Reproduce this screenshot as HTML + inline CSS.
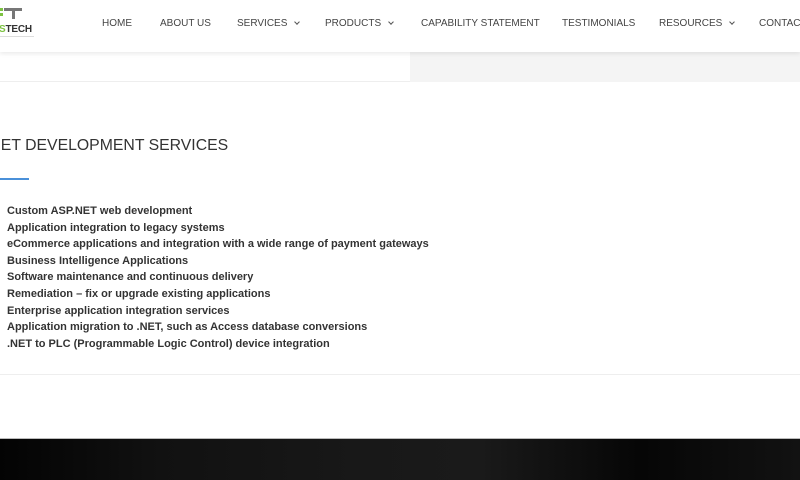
<!DOCTYPE html>
<html><head><style>
html,body{margin:0;padding:0;width:800px;height:480px;overflow:hidden;background:#fff;font-family:"Liberation Sans",sans-serif;position:relative}
.hdr{position:absolute;left:0;top:0;width:800px;height:52px;background:#fff;box-shadow:0 2px 4px rgba(0,0,0,.08);z-index:2}
.nav{position:absolute;top:18px;font-size:10px;color:#444;white-space:nowrap;letter-spacing:0}
.nav span{position:absolute}
.chev{display:inline-block;width:3px;height:3px;border-right:1px solid #555;border-bottom:1px solid #555;transform:rotate(45deg);margin-left:8px;position:relative;top:-2px}
.band1{position:absolute;left:0;top:52px;width:410px;height:29px;background:#fff;border-bottom:1px solid #eee}
.band2{position:absolute;left:410px;top:52px;width:390px;height:30px;background:#f4f4f4}
h1{position:absolute;left:-15px;top:137px;margin:0;font-weight:normal;font-size:15.8px;color:#333;white-space:nowrap;letter-spacing:0}
.bl{position:absolute;left:0;top:178px;width:29px;height:2px;background:#4a90d9}
ul{position:absolute;left:7px;top:203px;margin:0;padding:0;list-style:none;font-size:11px;font-weight:bold;color:#333;line-height:16.6px}
.hr{position:absolute;left:0;top:374px;width:800px;height:1px;background:#eee}
.ft{position:absolute;left:0;top:438px;width:800px;height:42px;background:linear-gradient(90deg,#030303 0%,#111 20%,#181818 45%,#1a1a1a 60%,#060606 80%,#121212 100%);border-top:1px solid #bbb}
</style></head><body>
<div class="hdr">
 <div style="position:absolute;left:0;top:8px;width:3px;height:3px;background:#7cc242"></div>
 <div style="position:absolute;left:4px;top:8px;width:18px;height:3px;background:#777"></div>
 <div style="position:absolute;left:12px;top:8px;width:3px;height:11px;background:#777"></div>
 <div style="position:absolute;left:0;top:13px;width:3px;height:3px;background:#7cc242"></div>
 <div style="position:absolute;left:-1px;top:24px;font-size:10px;font-weight:bold;letter-spacing:-.2px"><span style="color:#7cc242">S</span><span style="color:#333">TECH</span></div>
 <div style="position:absolute;left:0;top:36px;width:34px;height:1px;background:#ddd"></div>
 <div class="nav"><span style="left:102px">HOME</span><span style="left:160px">ABOUT US</span><span style="left:237px">SERVICES<i class="chev"></i></span><span style="left:325px">PRODUCTS<i class="chev"></i></span><span style="left:421px">CAPABILITY STATEMENT</span><span style="left:562px">TESTIMONIALS</span><span style="left:659px">RESOURCES<i class="chev"></i></span><span style="left:759px">CONTACT</span></div>
</div>
<div class="band1"></div><div class="band2"></div>
<h1>.NET DEVELOPMENT SERVICES</h1>
<div class="bl"></div>
<ul>
<li>Custom ASP.NET web development</li>
<li>Application integration to legacy systems</li>
<li>eCommerce applications and integration with a wide range of payment gateways</li>
<li>Business Intelligence Applications</li>
<li>Software maintenance and continuous delivery</li>
<li>Remediation – fix or upgrade existing applications</li>
<li>Enterprise application integration services</li>
<li>Application migration to .NET, such as Access database conversions</li>
<li>.NET to PLC (Programmable Logic Control) device integration</li>
</ul>
<div class="hr"></div>
<div class="ft"></div>
</body></html>
